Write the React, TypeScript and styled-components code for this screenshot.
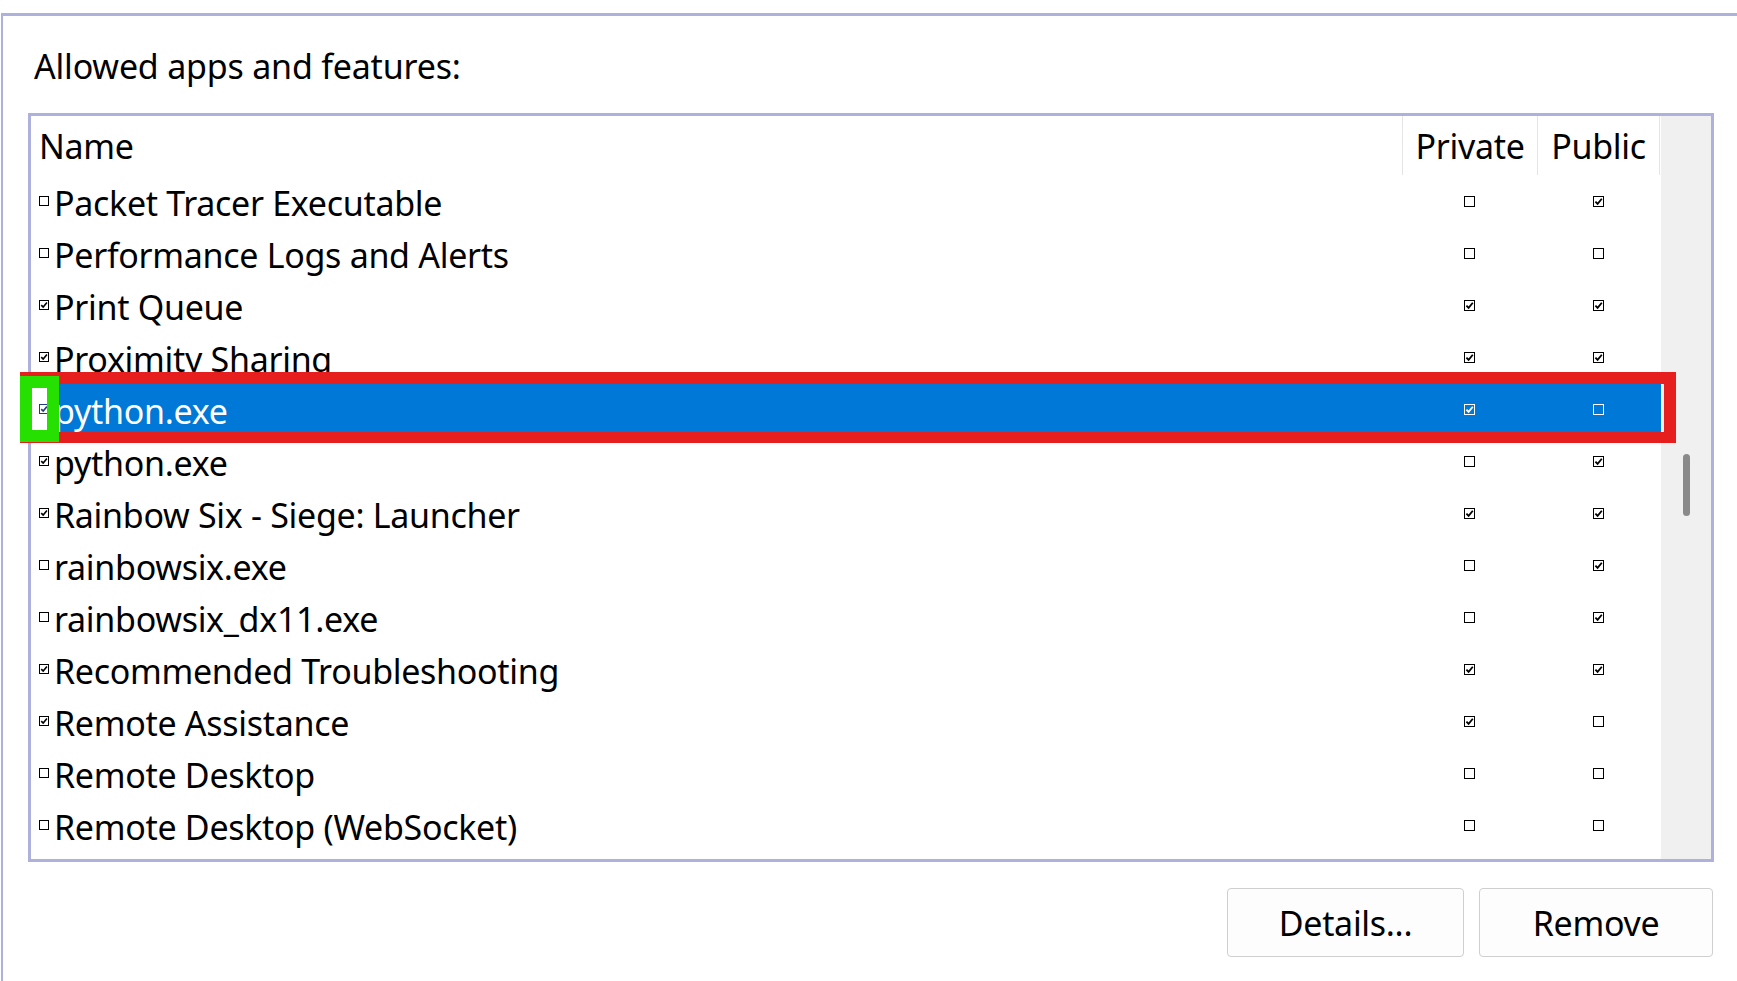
import React from "react";
import styled, { createGlobalStyle } from "styled-components";

const GlobalStyle = createGlobalStyle`
  html, body {
    margin: 0;
    padding: 0;
    background: #ffffff;
    overflow: hidden;
  }
  body {
    font-family: "Noto Sans", "Open Sans", sans-serif;
    color: #000000;
  }
`;

const LAVENDER = "#aeb1dc";

const Page = styled.div`
  position: relative;
  width: 1737px;
  height: 981px;
  padding: 13px 0 0 1px;
  box-sizing: border-box;
  overflow: hidden;
`;

const Frame = styled.div`
  display: flex;
  flex-direction: column;
  height: 100%;
  box-sizing: border-box;
  border-top: 3px solid ${LAVENDER};
  border-left: 2px solid ${LAVENDER};
  padding: 0 23px 0 25px;
`;

const Title = styled.div`
  margin: 28px 0 0 6px;
  font-size: 34px;
  letter-spacing: -0.2px;
  line-height: 44px;
  white-space: nowrap;
`;

const ListBox = styled.div`
  display: flex;
  margin-top: 25px;
  height: 749px;
  box-sizing: border-box;
  border: 3px solid ${LAVENDER};
  overflow: hidden;
`;

const ListContent = styled.div`
  flex: 1;
  overflow: hidden;
  background: #ffffff;
`;

const ScrollTrack = styled.div`
  width: 50px;
  flex: none;
  background: #f0f0f0;
  box-sizing: border-box;
  padding: 338px 0 0 22px;
`;

const ScrollThumb = styled.div`
  width: 7px;
  height: 62px;
  border-radius: 4px;
  background: #8a8a8a;
`;

const Columns = styled.div`
  display: grid;
  grid-template-columns: 1371px 135px 122px 1fr;
`;

const HeaderRow = styled(Columns)`
  height: 59px;
  font-size: 34px;
  letter-spacing: -0.3px;
  line-height: 61px;
`;

const HeaderCell = styled.div<{ $align?: "left" | "center"; $divider?: boolean }>`
  text-align: ${(p) => p.$align ?? "center"};
  padding-left: ${(p) => (p.$align === "left" ? "8px" : "0")};
  border-left: ${(p) => (p.$divider ? "1px solid #e5e5e5" : "none")};
  white-space: nowrap;
  overflow: hidden;
`;

const Row = styled(Columns)<{ $selected?: boolean }>`
  height: 52px;
  font-size: 34px;
  letter-spacing: -0.3px;
  line-height: 52px;
  background: ${(p) => (p.$selected ? "#0078d7" : "transparent")};
  color: ${(p) => (p.$selected ? "#ffffff" : "#000000")};
`;

const NameCell = styled.div`
  display: flex;
  align-items: center;
  padding-left: 8px;
  white-space: nowrap;
  overflow: hidden;
`;

const NameText = styled.span`
  margin-left: 5px;
  padding-top: 4px;
`;

const CheckCell = styled.div`
  display: flex;
  align-items: center;
  justify-content: center;
`;

type Tone = "dark" | "light" | "navy";

const toneColor: Record<Tone, string> = {
  dark: "#000000",
  light: "#ffffff",
  navy: "#1d3e78",
};

const Box = styled.span<{ $size: number; $tone: Tone }>`
  display: inline-flex;
  align-items: center;
  justify-content: center;
  flex: none;
  width: ${(p) => p.$size}px;
  height: ${(p) => p.$size}px;
  box-sizing: border-box;
  border: 1px solid ${(p) => toneColor[p.$tone]};
  background: ${(p) => (p.$tone === "light" ? "transparent" : "#ffffff")};
`;

const CheckBox = ({
  checked,
  size,
  tone = "dark",
}: {
  checked: boolean;
  size: number;
  tone?: Tone;
}) => (
  <Box $size={size} $tone={tone}>
    {checked && (
      <svg width={size - 2} height={size - 2} viewBox="0 0 9 9">
        <path
          d="M1.4 4.6 L3.6 6.9 L7.8 1.8"
          fill="none"
          stroke={toneColor[tone]}
          strokeWidth="1.8"
        />
      </svg>
    )}
  </Box>
);

const ButtonBar = styled.div`
  display: flex;
  justify-content: flex-end;
  gap: 15px;
  margin-top: 26px;
  padding-right: 1px;
`;

const Button = styled.button<{ $width: number }>`
  width: ${(p) => p.$width}px;
  height: 69px;
  box-sizing: border-box;
  border: 1px solid #cfcfcf;
  border-radius: 4px;
  background: #fdfdfd;
  font-family: "Noto Sans", "Open Sans", sans-serif;
  font-size: 34px;
  letter-spacing: -0.3px;
  color: #000000;
  padding: 0;
`;

const RedMark = styled.div`
  position: absolute;
  left: 20px;
  top: 372px;
  width: 1656px;
  height: 71px;
  box-sizing: border-box;
  border: 12px solid #e61e1e;
  border-bottom-width: 11px;
  pointer-events: none;
`;

const GreenMark = styled.div`
  position: absolute;
  left: 20px;
  top: 376px;
  width: 39px;
  height: 66px;
  box-sizing: border-box;
  background: #25e000;
  padding: 12px 0 0 12px;
`;

const GreenHole = styled.div`
  width: 15px;
  height: 42px;
  background: #ffffff;
  display: flex;
  align-items: center;
  padding-left: 7px;
  box-sizing: border-box;
  overflow: hidden;
`;

type Rule = {
  name: string;
  enabled: boolean;
  priv: boolean;
  pub: boolean;
  selected?: boolean;
};

const rules: Rule[] = [
  { name: "Packet Tracer Executable", enabled: false, priv: false, pub: true },
  { name: "Performance Logs and Alerts", enabled: false, priv: false, pub: false },
  { name: "Print Queue", enabled: true, priv: true, pub: true },
  { name: "Proximity Sharing", enabled: true, priv: true, pub: true },
  { name: "python.exe", enabled: true, priv: true, pub: false, selected: true },
  { name: "python.exe", enabled: true, priv: false, pub: true },
  { name: "Rainbow Six - Siege: Launcher", enabled: true, priv: true, pub: true },
  { name: "rainbowsix.exe", enabled: false, priv: false, pub: true },
  { name: "rainbowsix_dx11.exe", enabled: false, priv: false, pub: true },
  { name: "Recommended Troubleshooting", enabled: true, priv: true, pub: true },
  { name: "Remote Assistance", enabled: true, priv: true, pub: false },
  { name: "Remote Desktop", enabled: false, priv: false, pub: false },
  { name: "Remote Desktop (WebSocket)", enabled: false, priv: false, pub: false },
];

const App = () => {
  return (
    <>
      <GlobalStyle />
      <Page>
        <Frame>
          <Title>Allowed apps and features:</Title>
          <ListBox>
            <ListContent>
              <HeaderRow>
                <HeaderCell $align="left">Name</HeaderCell>
                <HeaderCell $divider>Private</HeaderCell>
                <HeaderCell $divider>Public</HeaderCell>
                <HeaderCell $divider />
              </HeaderRow>
              {rules.map((r, i) => (
                <Row key={i} $selected={r.selected}>
                  <NameCell>
                    <CheckBox checked={r.enabled} size={10} />
                    <NameText>{r.name}</NameText>
                  </NameCell>
                  <CheckCell>
                    <CheckBox checked={r.priv} size={11} tone={r.selected ? "light" : "dark"} />
                  </CheckCell>
                  <CheckCell>
                    <CheckBox checked={r.pub} size={11} tone={r.selected ? "light" : "dark"} />
                  </CheckCell>
                  <div />
                </Row>
              ))}
            </ListContent>
            <ScrollTrack>
              <ScrollThumb />
            </ScrollTrack>
          </ListBox>
          <ButtonBar>
            <Button $width={237}>Details...</Button>
            <Button $width={234}>Remove</Button>
          </ButtonBar>
        </Frame>
        <RedMark />
        <GreenMark>
          <GreenHole>
            <CheckBox checked size={10} tone="navy" />
          </GreenHole>
        </GreenMark>
      </Page>
    </>
  );
};

export default App;
